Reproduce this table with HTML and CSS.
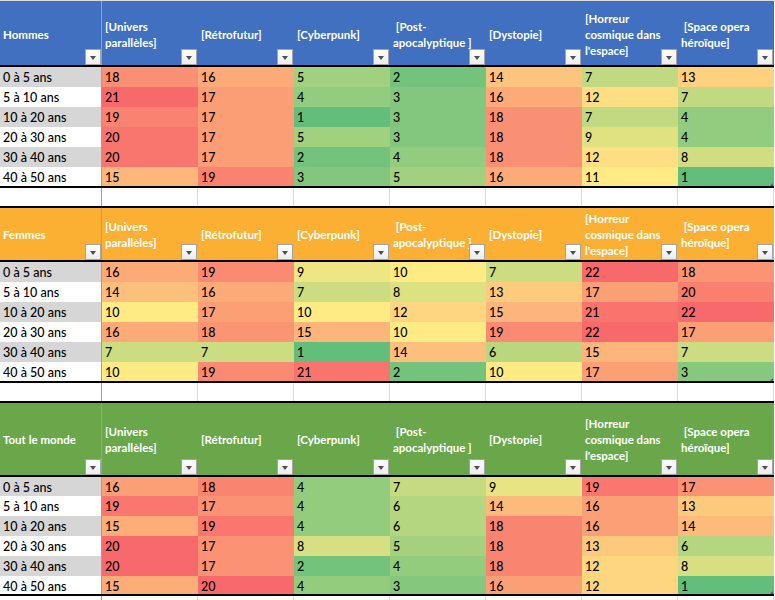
FILE: index.html
```html
<!DOCTYPE html>
<html lang="fr">
<head>
<meta charset="utf-8">
<title>Tableaux</title>
<link rel="stylesheet" href="styles.css">
</head>
<body>
<div class="sheet">

  <div class="tbl t1" data-mid="11">
    <div class="row head">
      <div class="hc fc"><span class="txt">Hommes</span><i class="dd"></i></div>
      <div class="hc"><span class="txt">[Univers<br>parallèles]</span><i class="dd"></i></div>
      <div class="hc"><span class="txt">[Rétrofutur]</span><i class="dd"></i></div>
      <div class="hc"><span class="txt">[Cyberpunk]</span><i class="dd"></i></div>
      <div class="hc"><span class="txt">&nbsp;[Post-<br>apocalyptique&nbsp;]</span><i class="dd"></i></div>
      <div class="hc"><span class="txt">[Dystopie]</span><i class="dd"></i></div>
      <div class="hc"><span class="txt">[Horreur<br>cosmique dans<br>l'espace]</span><i class="dd"></i></div>
      <div class="hc"><span class="txt">&nbsp;[Space opera<br>héroïque]</span><i class="dd"></i></div>
    </div>
    <div class="row r"><div class="c fc">0 à 5 ans</div><div class="c v">18</div><div class="c v">16</div><div class="c v">5</div><div class="c v">2</div><div class="c v">14</div><div class="c v">7</div><div class="c v">13</div></div>
    <div class="row r"><div class="c fc">5 à 10 ans</div><div class="c v">21</div><div class="c v">17</div><div class="c v">4</div><div class="c v">3</div><div class="c v">16</div><div class="c v">12</div><div class="c v">7</div></div>
    <div class="row r"><div class="c fc">10 à 20 ans</div><div class="c v">19</div><div class="c v">17</div><div class="c v">1</div><div class="c v">3</div><div class="c v">18</div><div class="c v">7</div><div class="c v">4</div></div>
    <div class="row r"><div class="c fc">20 à 30 ans</div><div class="c v">20</div><div class="c v">17</div><div class="c v">5</div><div class="c v">3</div><div class="c v">18</div><div class="c v">9</div><div class="c v">4</div></div>
    <div class="row r"><div class="c fc">30 à 40 ans</div><div class="c v">20</div><div class="c v">17</div><div class="c v">2</div><div class="c v">4</div><div class="c v">18</div><div class="c v">12</div><div class="c v">8</div></div>
    <div class="row r"><div class="c fc">40 à 50 ans</div><div class="c v">15</div><div class="c v">19</div><div class="c v">3</div><div class="c v">5</div><div class="c v">16</div><div class="c v">11</div><div class="c v">1</div></div>
  </div>

  <div class="row gap"><div class="fc"></div><div></div><div></div><div></div><div></div><div></div><div></div><div></div></div>

  <div class="tbl t2" data-mid="10">
    <div class="row head">
      <div class="hc fc"><span class="txt">Femmes</span><i class="dd"></i></div>
      <div class="hc"><span class="txt">[Univers<br>parallèles]</span><i class="dd"></i></div>
      <div class="hc"><span class="txt">[Rétrofutur]</span><i class="dd"></i></div>
      <div class="hc"><span class="txt">[Cyberpunk]</span><i class="dd"></i></div>
      <div class="hc"><span class="txt">&nbsp;[Post-<br>apocalyptique&nbsp;]</span><i class="dd"></i></div>
      <div class="hc"><span class="txt">[Dystopie]</span><i class="dd"></i></div>
      <div class="hc"><span class="txt">[Horreur<br>cosmique dans<br>l'espace]</span><i class="dd"></i></div>
      <div class="hc"><span class="txt">&nbsp;[Space opera<br>héroïque]</span><i class="dd"></i></div>
    </div>
    <div class="row r"><div class="c fc">0 à 5 ans</div><div class="c v">16</div><div class="c v">19</div><div class="c v">9</div><div class="c v">10</div><div class="c v">7</div><div class="c v">22</div><div class="c v">18</div></div>
    <div class="row r"><div class="c fc">5 à 10 ans</div><div class="c v">14</div><div class="c v">16</div><div class="c v">7</div><div class="c v">8</div><div class="c v">13</div><div class="c v">17</div><div class="c v">20</div></div>
    <div class="row r"><div class="c fc">10 à 20 ans</div><div class="c v">10</div><div class="c v">17</div><div class="c v">10</div><div class="c v">12</div><div class="c v">15</div><div class="c v">21</div><div class="c v">22</div></div>
    <div class="row r"><div class="c fc">20 à 30 ans</div><div class="c v">16</div><div class="c v">18</div><div class="c v">15</div><div class="c v">10</div><div class="c v">19</div><div class="c v">22</div><div class="c v">17</div></div>
    <div class="row r"><div class="c fc">30 à 40 ans</div><div class="c v">7</div><div class="c v">7</div><div class="c v">1</div><div class="c v">14</div><div class="c v">6</div><div class="c v">15</div><div class="c v">7</div></div>
    <div class="row r"><div class="c fc">40 à 50 ans</div><div class="c v">10</div><div class="c v">19</div><div class="c v">21</div><div class="c v">2</div><div class="c v">10</div><div class="c v">17</div><div class="c v">3</div></div>
  </div>

  <div class="row gap"><div class="fc"></div><div></div><div></div><div></div><div></div><div></div><div></div><div></div></div>

  <div class="tbl t3" data-mid="10.5">
    <div class="row head">
      <div class="hc fc"><span class="txt">Tout le monde</span><i class="dd"></i></div>
      <div class="hc"><span class="txt">[Univers<br>parallèles]</span><i class="dd"></i></div>
      <div class="hc"><span class="txt">[Rétrofutur]</span><i class="dd"></i></div>
      <div class="hc"><span class="txt">[Cyberpunk]</span><i class="dd"></i></div>
      <div class="hc"><span class="txt">&nbsp;[Post-<br>apocalyptique&nbsp;]</span><i class="dd"></i></div>
      <div class="hc"><span class="txt">[Dystopie]</span><i class="dd"></i></div>
      <div class="hc"><span class="txt">[Horreur<br>cosmique dans<br>l'espace]</span><i class="dd"></i></div>
      <div class="hc"><span class="txt">&nbsp;[Space opera<br>héroïque]</span><i class="dd"></i></div>
    </div>
    <div class="row r"><div class="c fc">0 à 5 ans</div><div class="c v">16</div><div class="c v">18</div><div class="c v">4</div><div class="c v">7</div><div class="c v">9</div><div class="c v">19</div><div class="c v">17</div></div>
    <div class="row r"><div class="c fc">5 à 10 ans</div><div class="c v">19</div><div class="c v">17</div><div class="c v">4</div><div class="c v">6</div><div class="c v">14</div><div class="c v">16</div><div class="c v">13</div></div>
    <div class="row r"><div class="c fc">10 à 20 ans</div><div class="c v">15</div><div class="c v">19</div><div class="c v">4</div><div class="c v">6</div><div class="c v">18</div><div class="c v">16</div><div class="c v">14</div></div>
    <div class="row r"><div class="c fc">20 à 30 ans</div><div class="c v">20</div><div class="c v">17</div><div class="c v">8</div><div class="c v">5</div><div class="c v">18</div><div class="c v">13</div><div class="c v">6</div></div>
    <div class="row r"><div class="c fc">30 à 40 ans</div><div class="c v">20</div><div class="c v">17</div><div class="c v">2</div><div class="c v">4</div><div class="c v">18</div><div class="c v">12</div><div class="c v">8</div></div>
    <div class="row r"><div class="c fc">40 à 50 ans</div><div class="c v">15</div><div class="c v">20</div><div class="c v">4</div><div class="c v">3</div><div class="c v">16</div><div class="c v">12</div><div class="c v">1</div></div>
  </div>

  <div class="row gap tail"><div class="fc"></div><div></div><div></div><div></div><div></div><div></div><div></div><div></div></div>

</div>
<script src="script.js"></script>
</body>
</html>
```

FILE: styles.css
```css
html, body {
  margin: 0;
  padding: 0;
  background: #ffffff;
}

body {
  font-family: Lato, "Liberation Sans", Arial, sans-serif;
  color: #000000;
}

.sheet {
  width: 775px;
  border-top: 1px solid #dadada;
}

.row {
  display: grid;
  grid-template-columns: 102px repeat(7, 96px);
  width: 774px;
}

.tbl {
  position: relative;
  width: 774px;
  border-bottom: 2px solid #000000;
}

.t2, .t3 {
  border-top: 2px solid #000000;
}

.t1 { --head: #4070bf; }
.t2 { --head: #fbb034; }
.t3 { --head: #6aa74a; }

.head {
  background: var(--head);
  border-bottom: 2px solid #000000;
}

.t1 .head { height: 64px; }
.t2 .head { height: 52px; }
.t3 .head { height: 72px; }

.hc {
  display: grid;
  box-sizing: border-box;
  padding: 2px 0 0 3px;
  border-right: 1px solid transparent;
  color: #ffffff;
  font-weight: 700;
  font-size: 11.5px;
  line-height: 16px;
  white-space: nowrap;
}

.t1 .hc { padding-top: 3px; }

.hc > .txt,
.hc > .dd {
  grid-area: 1 / 1;
}

.hc > .txt {
  align-self: center;
}

.hc > .dd {
  align-self: end;
  justify-self: end;
}

.fc {
  border-right: 1px solid #9f9f9f !important;
}

.dd {
  display: block;
  box-sizing: border-box;
  width: 16px;
  height: 16px;
  border: 1px solid #a3a3a3;
  background: linear-gradient(#ffffff, #ebebeb);
  position: relative;
}

.dd::after {
  content: "";
  position: absolute;
  left: 4px;
  top: 6px;
  border-left: 3.5px solid transparent;
  border-right: 3.5px solid transparent;
  border-top: 4px solid #4f4f4f;
}

.r {
  height: 20px;
}

.r:last-child {
  height: 19px;
}

.t3 .head + .r {
  height: 19px;
}

.t3 .r:last-child {
  height: 18px;
}

.c {
  box-sizing: border-box;
  padding: 1px 0 0 3px;
  font-size: 12.5px;
  font-weight: 500;
  line-height: 20px;
  white-space: nowrap;
  overflow: hidden;
  border-right: 1px solid transparent;
}

.r .fc {
  background: #ffffff;
}

.r:nth-child(even) .fc {
  background: #d6d6d6;
}

.gap {
  height: 18px;
}

.gap > div {
  box-sizing: border-box;
  border-right: 1px solid #dadada;
}

.tail {
  height: 10px;
}

.tbl::after {
  content: "";
  position: absolute;
  right: 1px;
  bottom: 0;
  width: 0;
  height: 0;
  border-left: 3px solid transparent;
  border-bottom: 3px solid #3a5a9c;
}
```

FILE: script.js
```js
(function () {
  var G = [99, 190, 123];
  var Y = [255, 235, 132];
  var R = [248, 105, 107];
  var tables = document.querySelectorAll('.tbl');
  for (var t = 0; t < tables.length; t++) {
    var cells = tables[t].querySelectorAll('.v');
    var vals = [];
    for (var i = 0; i < cells.length; i++) vals.push(parseFloat(cells[i].textContent));
    var min = Math.min.apply(null, vals);
    var max = Math.max.apply(null, vals);
    var mid = parseFloat(tables[t].getAttribute('data-mid'));
    if (isNaN(mid)) mid = (min + max) / 2;
    for (var j = 0; j < cells.length; j++) {
      var v = vals[j], a, b, k;
      if (v <= mid) { a = G; b = Y; k = (v - min) / (mid - min); }
      else { a = Y; b = R; k = (v - mid) / (max - mid); }
      var col = [];
      for (var c = 0; c < 3; c++) col.push(Math.round(a[c] + (b[c] - a[c]) * k));
      cells[j].style.backgroundColor = 'rgb(' + col.join(',') + ')';
    }
  }
})();
```
